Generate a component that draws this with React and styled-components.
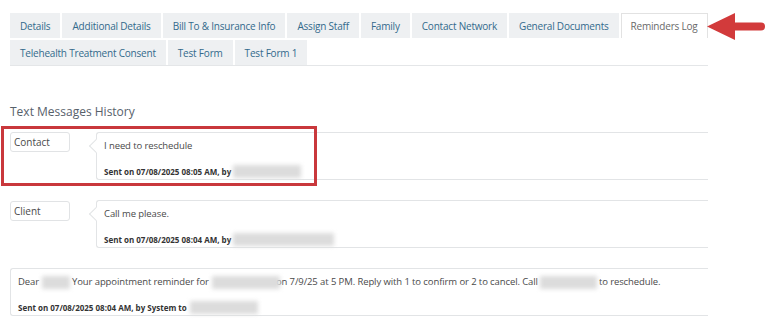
import React from 'react';
import styled, { createGlobalStyle } from 'styled-components';

const GlobalStyle = createGlobalStyle`
  body {
    margin: 0;
    background: #ffffff;
    font-family: "Open Sans", "Liberation Sans", Arial, sans-serif;
    color: #444;
  }
`;

const Page = styled.div`
  position: relative;
  width: 767px;
  height: 321px;
  overflow: hidden;
  padding: 13px 0 0 10px;
  box-sizing: border-box;
`;

const Content = styled.div`
  width: 698px;
`;

const TabBar = styled.div`
  display: flex;
  flex-wrap: wrap;
  gap: 2px 2px;
  border-bottom: 1px solid #e4e6e8;
`;

const Tab = styled.div`
  height: 25px;
  padding: 0 9px;
  display: flex;
  align-items: center;
  font-size: 10px;
  letter-spacing: -0.2px;
  box-sizing: border-box;
  white-space: nowrap;
  background: ${p => (p.active ? '#ffffff' : '#eef0f2')};
  color: ${p => (p.active ? '#6a6a6a' : '#336a8c')};
  border: 1px solid ${p => (p.active ? '#e2e2e2' : 'transparent')};
  border-bottom: none;
`;

const Heading = styled.h3`
  margin: 37px 0 0;
  font-size: 12px;
  font-weight: 400;
  color: #57616b;
  line-height: 18px;
`;

const List = styled.div`
  display: flex;
  flex-direction: column;
  gap: 20px;
  margin-top: 11px;
`;

const Row = styled.div`
  display: flex;
  align-items: flex-start;
`;

const Sender = styled.div`
  width: 60px;
  height: 20px;
  box-sizing: border-box;
  border: 1px solid #e1e3e5;
  border-radius: 3px;
  font-size: 10px;
  padding: 2px 0 0 3px;
  color: #4a4a4a;
  margin-top: ${p => p.offset || 0}px;
`;

const Bubble = styled.div`
  position: relative;
  margin-left: 26px;
  flex: 1;
  height: 48px;
  box-sizing: border-box;
  border: 1px solid #e2e4e6;
  border-right: none;
  border-radius: 3px 0 0 3px;
  padding: 6px 0 0 7px;

  &::before {
    content: '';
    position: absolute;
    left: -6px;
    top: 8px;
    width: 9px;
    height: 9px;
    background: #fff;
    border-left: 1px solid #e2e4e6;
    border-bottom: 1px solid #e2e4e6;
    transform: rotate(45deg);
  }
`;

const Notice = styled.div`
  height: 48px;
  box-sizing: border-box;
  border: 1px solid #e2e4e6;
  border-right: none;
  border-radius: 3px 0 0 3px;
  padding: 6px 0 0 7px;
`;

const Body = styled.div`
  font-size: 9.5px;
  letter-spacing: -0.1px;
  line-height: 14px;
  color: #4a4a4a;
  display: flex;
  align-items: center;
  white-space: nowrap;
`;

const Meta = styled.div`
  margin-top: 12px;
  font-size: 8px;
  font-weight: 700;
  line-height: 12px;
  color: #333;
  display: flex;
  align-items: center;
  white-space: nowrap;
`;

const Redacted = styled.span`
  display: inline-block;
  width: ${p => p.w}px;
  height: 13px;
  margin-left: ${p => p.ml ?? 2}px;
  margin-right: ${p => p.mr ?? 0}px;
  background: #dcdcdc;
  filter: blur(2px);
`;

const Highlight = styled.div`
  position: absolute;
  left: 1px;
  top: 126px;
  width: 316px;
  height: 60px;
  box-sizing: border-box;
  border: 3px solid #c9383c;
`;

const Arrow = styled.svg`
  position: absolute;
  left: 705px;
  top: 12px;
`;

const tabs = [
  'Details',
  'Additional Details',
  'Bill To & Insurance Info',
  'Assign Staff',
  'Family',
  'Contact Network',
  'General Documents',
  'Reminders Log',
  'Telehealth Treatment Consent',
  'Test Form',
  'Test Form 1',
];

export default function App() {
  return (
    <Page>
      <GlobalStyle />
      <Content>
        <TabBar>
          {tabs.map(t => (
            <Tab key={t} active={t === 'Reminders Log'}>
              {t}
            </Tab>
          ))}
        </TabBar>

        <Heading>Text Messages History</Heading>

        <List>
          <Row>
            <Sender>Contact</Sender>
            <Bubble>
              <Body>I need to reschedule</Body>
              <Meta>
                Sent on 07/08/2025 08:05 AM, by
                <Redacted w={68} />
              </Meta>
            </Bubble>
          </Row>

          <Row>
            <Sender offset={1}>Client</Sender>
            <Bubble>
              <Body>Call me please.</Body>
              <Meta>
                Sent on 07/08/2025 08:04 AM, by
                <Redacted w={101} />
              </Meta>
            </Bubble>
          </Row>

          <Notice>
            <Body>
              Dear
              <Redacted w={28} ml={3} mr={2} />
              Your appointment reminder for
              <Redacted w={68} ml={3} mr={-4} />
              on 7/9/25 at 5 PM. Reply with 1 to confirm or 2 to cancel. Call
              <Redacted w={57} ml={2} mr={2} />
              to reschedule.
            </Body>
            <Meta>
              Sent on 07/08/2025 08:04 AM, by System to
              <Redacted w={68} ml={3} />
            </Meta>
          </Notice>
        </List>
      </Content>

      <Highlight />
      <Arrow width="62" height="30" viewBox="0 0 62 30">
        <path
          d="M2 14.5 L30 1 L30 10.5 L56 10.5 Q60 10.5 60 14.5 Q60 18.5 56 18.5 L30 18.5 L30 28 Z"
          fill="#d23a3b"
        />
      </Arrow>
    </Page>
  );
}
